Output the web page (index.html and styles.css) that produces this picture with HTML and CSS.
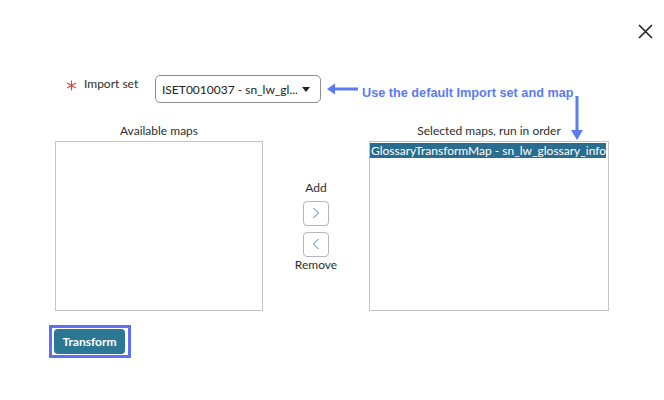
FILE: index.html
```html
<!DOCTYPE html>
<html lang="en">
<head>
    <meta charset="UTF-8">
    <title>Transform</title>
    <link rel="stylesheet" href="styles.css">
</head>
<body>
    <div class="modal">
        <div class="close-row">
            <button class="close-btn" aria-label="Close">
                <svg width="15" height="15" viewBox="0 0 15 15"><path d="M1 1L14 14M14 1L1 14" stroke="#222" stroke-width="1.6" fill="none"/></svg>
            </button>
        </div>

        <div class="import-row">
            <span class="required">
                <svg width="11" height="11" viewBox="0 0 11 11"><path d="M5.5 0.5V10.5M1.2 3L9.8 8M1.2 8L9.8 3" stroke="#e0453f" stroke-width="1.1" fill="none"/></svg>
            </span>
            <label class="import-label">Import set</label>
            <div class="select">
                <span class="select-text">ISET0010037 - sn_lw_gl...</span>
                <span class="caret"></span>
            </div>
        </div>

        <div class="slush">
            <div class="slush-label">Available maps</div>
            <div></div>
            <div class="slush-label">Selected maps, run in order</div>

            <div class="list-box"></div>
            <div class="mover">
                <span class="mover-label">Add</span>
                <button class="move-btn">
                    <svg width="8" height="12" viewBox="0 0 8 12"><path d="M1.5 1L6.5 6L1.5 11" stroke="#3f79a8" stroke-width="1" fill="none"/></svg>
                </button>
                <button class="move-btn">
                    <svg width="8" height="12" viewBox="0 0 8 12"><path d="M6.5 1L1.5 6L6.5 11" stroke="#3f79a8" stroke-width="1" fill="none"/></svg>
                </button>
                <span class="mover-label">Remove</span>
            </div>
            <div class="list-box">
                <div class="option selected">GlossaryTransformMap - sn_lw_glossary_info</div>
            </div>
        </div>

        <div class="footer">
            <div class="highlight">
                <button class="transform-btn">Transform</button>
            </div>
        </div>

        <!-- annotation overlay -->
        <svg class="arrow-left" width="32" height="14" viewBox="0 0 32 14"><path d="M31 7H5" stroke="#5a7cf2" stroke-width="3"/><path d="M0 7L8 1.5V12.5Z" fill="#5a7cf2"/></svg>
        <div class="note">Use the default Import set and map</div>
        <svg class="arrow-down" width="14" height="44" viewBox="0 0 14 44"><path d="M7 0V36" stroke="#5a7cf2" stroke-width="3"/><path d="M7 44L1 34H13Z" fill="#5a7cf2"/></svg>
    </div>
</body>
</html>
```

FILE: styles.css
```css
* {
    box-sizing: border-box;
}
body {
    margin: 0;
    background: #fff;
    font-family: Lato, "Open Sans", sans-serif;
    color: #2e2e2e;
}
.modal {
    position: relative;
    width: 664px;
    height: 400px;
    background: #fff;
}
.close-row {
    height: 62px;
    display: flex;
    justify-content: flex-end;
    align-items: center;
    padding-right: 11px;
}
.close-btn {
    border: none;
    background: none;
    padding: 0;
    width: 16px;
    height: 16px;
    display: flex;
    align-items: center;
    justify-content: center;
}
.import-row {
    margin-top: 13px;
    display: flex;
    align-items: flex-start;
    padding-left: 66px;
}
.required {
    display: flex;
    margin-top: 5px;
    width: 18px;
}
.import-label {
    font-size: 12px;
    line-height: 16px;
    margin-top: 1px;
    width: 71px;
}
.select {
    width: 166px;
    height: 28px;
    border: 1px solid #8e8e8e;
    border-radius: 5px;
    display: flex;
    align-items: center;
    justify-content: space-between;
    padding: 0 10px 0 6px;
    font-size: 12px;
    color: #222;
}
.select-text {
    white-space: nowrap;
}
.caret {
    width: 0;
    height: 0;
    border-left: 4px solid transparent;
    border-right: 4px solid transparent;
    border-top: 5px solid #222;
}
.slush {
    margin-top: 20px;
    padding-left: 55px;
    display: grid;
    grid-template-columns: 208px 106px 240px;
    grid-template-rows: 16px 170px;
    row-gap: 2px;
}
.slush-label {
    font-size: 12px;
    line-height: 16px;
    text-align: center;
    color: #2e2e2e;
}
.list-box {
    border: 1px solid #c4c4c4;
    padding: 1px 0 0 0;
}
.option {
    font-size: 12px;
    line-height: 15px;
    white-space: nowrap;
    width: max-content;
    padding-left: 1px;
}
.selected {
    background: #2b6d8e;
    color: #fff;
}
.mover {
    display: flex;
    flex-direction: column;
    align-items: center;
    justify-content: center;
    gap: 5px;
}
.mover-label {
    font-size: 12px;
    line-height: 16px;
    color: #2e2e2e;
}
.mover-label:last-child {
    margin-top: -5px;
}
.move-btn {
    width: 26px;
    height: 25px;
    border: 1px solid #b5b5b5;
    border-radius: 4px;
    background: #fff;
    display: flex;
    align-items: center;
    justify-content: center;
    padding: 0;
}
.move-btn + .move-btn {
    margin-top: 1px;
}
.footer {
    margin-top: 14px;
    padding-left: 49px;
}
.highlight {
    display: inline-block;
    border: 3px solid #5d6ff3;
    padding: 1px 3px 1px 2px;
}
.transform-btn {
    display: block;
    width: 71px;
    height: 25px;
    border: none;
    border-radius: 4px;
    background: #2c7894;
    color: #fff;
    font-family: Lato, sans-serif;
    font-weight: 700;
    font-size: 12px;
    padding: 0;
}
.arrow-left {
    position: absolute;
    left: 327px;
    top: 82px;
}
.note {
    position: absolute;
    left: 362px;
    top: 85px;
    font-family: "Liberation Sans", Arial, sans-serif;
    font-weight: 700;
    font-size: 12.7px;
    line-height: 16px;
    color: #5a7cf2;
}
.arrow-down {
    position: absolute;
    left: 570px;
    top: 96px;
}
```
